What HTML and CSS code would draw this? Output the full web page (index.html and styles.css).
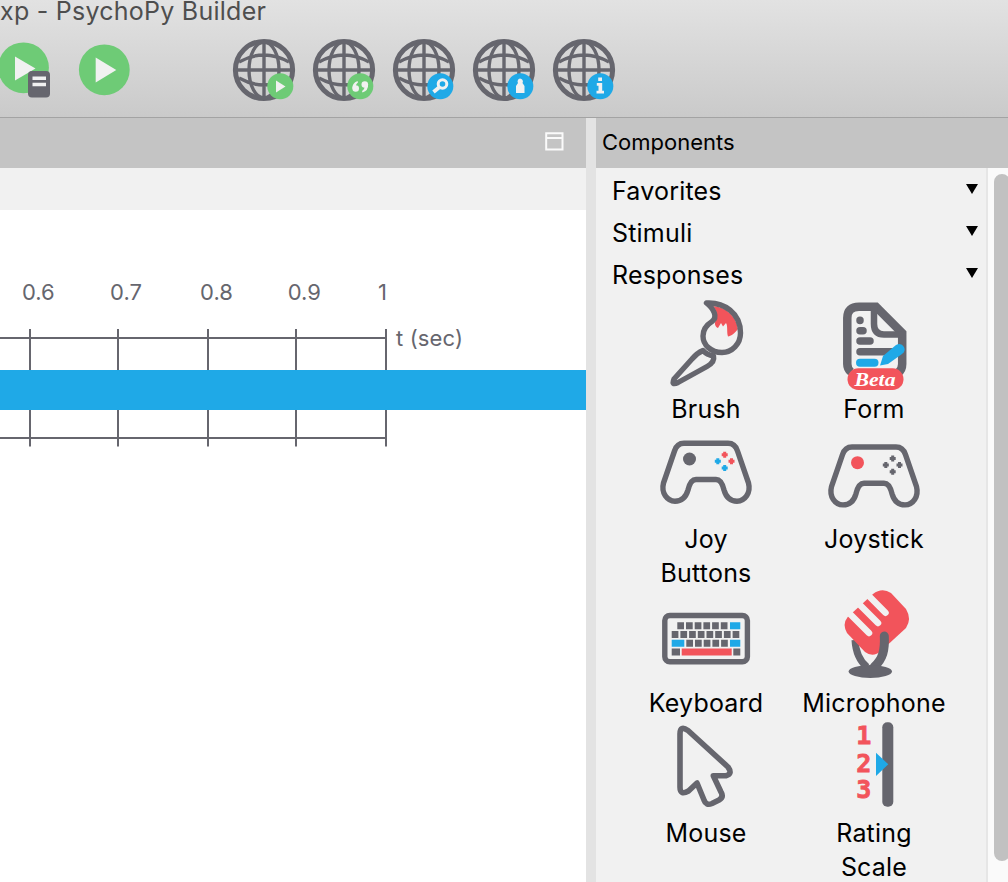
FILE: index.html
```html
<!DOCTYPE html>
<html lang="en">
<head>
<meta charset="utf-8">
<title>PsychoPy Builder</title>
<link rel="stylesheet" href="styles.css">
</head>
<body>
<svg class="defs" width="0" height="0">
  <defs>
    <g id="globe" fill="none" stroke="#66666e">
      <circle cx="32" cy="32" r="28.6" stroke-width="5"/>
      <path stroke-width="3.4" d="M32 4V60M4 32H60M7 24Q32 10 57 24M7 40Q32 54 57 40"/>
      <ellipse cx="32" cy="32" rx="15" ry="28" stroke-width="3.4"/>
    </g>
    <g id="pad">
      <path fill="none" stroke="#66666e" stroke-width="5.4" stroke-linejoin="round" d="M26 17.3H70Q77 17.3 79.500 25L90.500 57C93 67 87 75.2 79 75.2C72 75.2 68 71 66 64Q63.500 53.500 58 53.500H38Q32.500 53.500 30 64C28 71 24 75.200 17 75.200C9 75.200 3 67 5.500 57L16.500 25Q19 17.300 26 17.300Z"/>
    </g>
    <path id="dot" d="M-1.500 -3H1.500V-1.500H3V1.500H1.500V3H-1.500V1.500H-3V-1.500H-1.500Z"/>
  </defs>
</svg>
<div class="window">
  <header class="titlebar">
    <div class="title">xp - PsychoPy Builder</div>
    <div class="toolbar">
      <svg class="tool" viewBox="0 0 64 64"><circle cx="31.500" cy="29.800" r="25.400" fill="#6ecb76"/><path d="M23 18.500V42.500L43.500 30.500Z" fill="#f1f1f1"/><rect x="36" y="33" width="22" height="26.500" rx="4" fill="#66666e"/><path d="M40.500 40.200H54M40.500 46.500H54" stroke="#f1f1f1" stroke-width="3.600"/></svg>
      <svg class="tool" viewBox="0 0 64 64"><circle cx="32.300" cy="31.800" r="25.400" fill="#6ecb76"/><path d="M23.700 19.500V44.500L44.300 32Z" fill="#f1f1f1"/></svg>
      <span class="tool"></span>
      <svg class="tool" viewBox="0 0 64 64"><use href="#globe"/><circle cx="48.300" cy="48.300" r="13" fill="#6ecb76"/><path d="M44 42.500V54.500L53.500 48.500Z" fill="#f1f1f1"/></svg>
      <svg class="tool" viewBox="0 0 64 64"><use href="#globe"/><circle cx="48.300" cy="48.300" r="13" fill="#6ecb76"/><g fill="#f1f1f1"><circle cx="43.700" cy="50.500" r="3.300"/><path d="M40.400 50.500Q40 45 45.500 43L46 44.500Q43.500 46 43.700 50Z"/><circle cx="52.800" cy="46.500" r="3.300"/><path d="M56.100 46.500Q56.500 52.500 50.500 54.500L50 53Q53 51 52.800 47Z"/></g></svg>
      <svg class="tool" viewBox="0 0 64 64"><use href="#globe"/><circle cx="48.300" cy="48.300" r="13" fill="#1fa9e7"/><g stroke="#f1f1f1" fill="none" stroke-width="3"><circle cx="50.500" cy="46" r="4.300"/><path d="M47 49.500L41.500 54" stroke-width="3.800"/></g></svg>
      <svg class="tool" viewBox="0 0 64 64"><use href="#globe"/><circle cx="48.300" cy="48.300" r="13" fill="#1fa9e7"/><path fill="#f1f1f1" d="M48 40.500A3 3 0 0 1 50.500 45L52.500 48V55H44V48L46 45A3 3 0 0 1 48 40.500Z"/></svg>
      <svg class="tool" viewBox="0 0 64 64"><use href="#globe"/><circle cx="48.300" cy="48.300" r="13" fill="#1fa9e7"/><path fill="#f1f1f1" d="M46.200 39.500H50V43H46.200ZM44.800 45H50.200V52.700H52V55.500H44.500V52.700H46.500V47.700H44.800Z"/></svg>
    </div>
  </header>
  <div class="body">
    <main class="routine">
      <div class="panel-bar"><svg class="restore" width="19" height="19" viewBox="0 0 19 19"><path d="M1.200 1.200H17.500V17.500H1.200ZM1.200 6H17.500" fill="none" stroke="#fafafa" stroke-width="2"/></svg></div>
      <div class="tabs"></div>
      <svg class="timeline" width="586" height="672" viewBox="0 210 586 672">
        <path d="M0 338H387M0 438H387M30 329V446.500M118 329V446.500M208 329V446.500M296 329V446.500M386 329V446.500" stroke="#66666e" stroke-width="2" fill="none"/>
        <rect y="370" width="586" height="40" fill="#1fa9e7"/>
        <g class="ticks"><text x="38.300" y="300">0.6</text><text x="126" y="300">0.7</text><text x="216.500" y="300">0.8</text><text x="304.300" y="300">0.9</text><text x="382.500" y="300">1</text></g>
        <text class="unit" x="396" y="346" textLength="67">t (sec)</text>
      </svg>
    </main>
    <div class="sash"></div>
    <aside class="components">
      <div class="panel-bar">Components</div>
      <div class="scroller">
        <div class="list">
          <div class="category"><span>Favorites</span><i class="arrow"></i></div>
          <div class="category"><span>Stimuli</span><i class="arrow"></i></div>
          <div class="category"><span>Responses</span><i class="arrow"></i></div>
          <div class="grid">
            <div class="item">
              <svg viewBox="0 0 96 96"><path d="M55 10C68 11 78 20 80 33C76 38 73 40 70 40.500C68.500 36 70 30 68 27L65 30.500L63 27L60 32C57 31 56 27 58 24C60 18 58 14 55 10Z" fill="#f2545b"/><g fill="none" stroke="#66666e" stroke-width="5.400" stroke-linejoin="round"><path d="M48.500 7C66 6 82.500 17 82.500 37C82.500 48 74 56.500 64 56.500C53 56.500 45 49 45 40C45 32 50 28 54 25.500C60 21 56 13 48.500 7Z"/><path d="M45 54.500Q39 57 34 63L16 83Q13 90 20 86.500L49 70.500Q57 66 55.500 60Q49 59 45 54.500Z"/></g></svg>
              <span>Brush</span>
            </div>
            <div class="item">
              <svg viewBox="0 0 96 96"><g fill="none" stroke="#66666e"><path stroke-width="8.500" d="M25 76Q21.300 73 21.300 68V22Q21.300 10.800 33 10.800H50L76.200 37V68Q76.200 74 72 77"/><path stroke-width="6.500" d="M48 11V28Q48 38.500 58 38.500H76"/><path stroke-width="7.500" stroke-linecap="round" d="M34 24.300V24.400M34 34.700H37M34 45H44M34 55.700H66"/></g><path d="M34 66.700H48.500" stroke="#1fa9e7" stroke-width="8" stroke-linecap="round"/><path d="M54 69.500L57 60L70 49Q75 46 78 51Q80 55 76 58L62 68Z" fill="#1fa9e7"/><rect x="21.500" y="72.300" width="56" height="21.700" rx="10.800" fill="#f2545b"/><text class="beta" x="49" y="89.500" textLength="41" lengthAdjust="spacingAndGlyphs">Beta</text></svg>
              <span>Form</span>
            </div>
            <div class="item">
              <svg viewBox="0 0 96 96"><use href="#pad"/><circle cx="31.500" cy="33" r="6.500" fill="#66666e"/><g fill="#f2545b"><use href="#dot" x="66.700" y="28.700"/><use href="#dot" x="73.500" y="35.300"/></g><g fill="#1fa9e7"><use href="#dot" x="59.800" y="35.300"/><use href="#dot" x="66.700" y="42"/></g></svg>
              <span>Joy Buttons</span>
            </div>
            <div class="item">
              <svg viewBox="0 -3.700 96 96"><use href="#pad"/><circle cx="31.500" cy="33" r="6.500" fill="#f2545b"/><g fill="#66666e"><use href="#dot" x="66.700" y="28.700"/><use href="#dot" x="73.500" y="35.300"/><use href="#dot" x="59.800" y="35.300"/><use href="#dot" x="66.700" y="42"/></g></svg>
              <span>Joystick</span>
            </div>
            <div class="item">
              <svg viewBox="0 0 96 96"><rect x="6.800" y="25.500" width="82.600" height="46.200" rx="5" fill="none" stroke="#66666e" stroke-width="5.400"/><g fill="none" stroke="#66666e" stroke-width="7"><path stroke-dasharray="6.700 2" d="M19.300 35.700H70.500M13.700 44.500H82.300M28.300 53.300H70.500"/><path d="M13.700 62H22M75.300 62H82.300"/><path stroke="#1fa9e7" d="M72 35.700H82.300M13.700 53.300H26.300M72 53.300H82.300"/><path stroke="#f2545b" d="M23.700 62H73.700"/></g></svg>
              <span>Keyboard</span>
            </div>
            <div class="item">
              <svg viewBox="0 0 96 96"><path d="M29 50Q30 68 41 77" fill="none" stroke="#66666e" stroke-width="7"/><path d="M21.700 27L47 4Q56 -3 65 3L80 19Q86 29 80 38L55 61Q47 68 39 62L21 43Q16 34 21.700 27Z" fill="#f2545b"/><path d="M17 17L43 43M26 7L52 33M35 -2L59.500 22.800" stroke="#f1f1f1" stroke-width="6.500" stroke-linecap="round"/><path d="M58.300 46C59 60 57 69 48 77" fill="none" stroke="#66666e" stroke-width="9" stroke-linecap="round"/><ellipse cx="44.300" cy="81.500" rx="21.700" ry="6.500" fill="#66666e"/></svg>
              <span>Microphone</span>
            </div>
            <div class="item">
              <svg viewBox="0 0 96 96"><path d="M30 10.500L70 47Q75 54 68 55.700H55.300L63 72Q66 77 61 80L54 83.500Q48 86 46 80L39 63L30.500 71Q22 76 22 67V14Q22 5 30 10.500Z" fill="none" stroke="#66666e" stroke-width="5.600" stroke-linejoin="round"/></svg>
              <span>Mouse</span>
            </div>
            <div class="item">
              <svg viewBox="0 0 96 96"><rect x="56.300" y="2.300" width="11" height="84.400" rx="5" fill="#66666e"/><path d="M50 32.700V56L62.300 44.300Z" fill="#1fa9e7"/><g class="digits"><text x="37.700" y="24">1</text><text x="37.700" y="51.500">2</text><text x="37.700" y="77.500">3</text></g></svg>
              <span>Rating Scale</span>
            </div>
          </div>
        </div>
        <div class="track"><div class="thumb"></div></div>
      </div>
    </aside>
  </div>
</div>
</body>
</html>
```
FILE: styles.css
```css
* { box-sizing: border-box; }
body { margin: 0; font-family: Inter, "Liberation Sans", sans-serif; color: #000; }
.defs { display: block; height: 0; }
.window { width: 1008px; height: 882px; overflow: hidden; display: flex; flex-direction: column; }
.titlebar { height: 118px; flex: none; background: linear-gradient(#e2e2e2, #cacaca); border-bottom: 1px solid #a3a3a3; }
.title { height: 33px; line-height: 22px; font-size: 25px; letter-spacing: 0.25px; color: #4e4e4e; white-space: nowrap; }
.toolbar { display: flex; gap: 16px; margin: 5px 0 0 -8px; }
.tool { width: 64px; height: 64px; flex: none; }
.body { flex: 1; display: flex; min-height: 0; }
.routine { width: 586px; flex: none; display: flex; flex-direction: column; background: #fff; }
.panel-bar { height: 50px; flex: none; background: #c4c4c4; display: flex; align-items: center; padding: 0 0 2px 6px; font-size: 22px; letter-spacing: 0; }
.restore { margin: 0 22px 2px auto; }
.tabs { height: 42px; flex: none; background: #f1f1f1; }
.timeline { display: block; flex: none; font-size: 22px; fill: #66666e; }
.ticks { text-anchor: middle; }
.sash { width: 10px; flex: none; background: #e3e3e3; }
.components { width: 412px; flex: none; display: flex; flex-direction: column; background: #f1f1f1; }
.scroller { flex: 1; display: flex; min-height: 0; }
.list { width: 390px; flex: none; padding-top: 2px; font-size: 25px; letter-spacing: 0.2px; overflow: hidden; }
.category { height: 42px; display: flex; align-items: center; justify-content: space-between; padding: 0 8px 0 16px; }
.arrow { width: 12px; height: 10px; margin-bottom: 4px; background: #000; clip-path: polygon(0 0, 100% 0, 50% 100%); }
.grid { display: grid; grid-template-columns: 168px 168px; margin-left: 26px; }
.item { display: flex; flex-direction: column; align-items: center; text-align: center; line-height: 34px; }
.item svg { width: 96px; height: 96px; flex: none; overflow: visible; }
.item span { max-width: 148px; }
.item:nth-child(3) span, .item:nth-child(8) span { width: 110px; }
.beta { font: italic bold 19px "Liberation Serif", serif; fill: #fff; text-anchor: middle; letter-spacing: 0; }
.digits { font: bold 25px "DejaVu Sans Mono", monospace; fill: #f2545b; stroke: #f2545b; stroke-width: 0.8px; text-anchor: middle; letter-spacing: 0; }
.track { flex: 1; min-width: 0; background: #fafafa; border-left: 2px solid #e6e6e6; padding: 6px 0 0 6px; overflow: hidden; }
.thumb { width: 16px; height: 687px; border-radius: 8px; background: #c1c1c1; }
```
